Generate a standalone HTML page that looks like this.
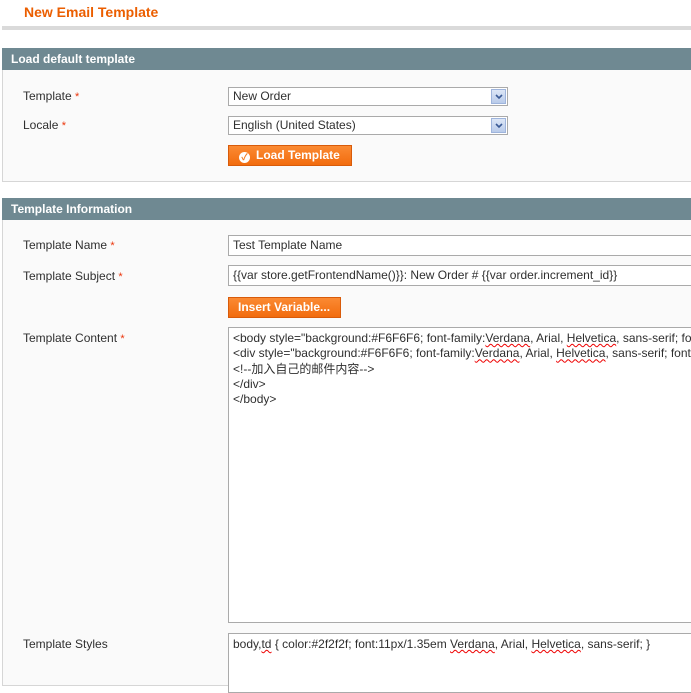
<!DOCTYPE html>
<html><head><meta charset="utf-8"><style>
body{margin:0;background:#fff;font-family:"Liberation Sans","Noto Sans CJK SC",sans-serif;font-size:12px;color:#2f2f2f;width:691px;height:685px;overflow:hidden;position:relative}
.a{position:absolute}
.title{left:24px;top:4px;font-size:14px;font-weight:bold;color:#eb5e00}
.bar{left:2px;top:26px;width:689px;height:4px;background:#dadada}
.hd{left:2px;width:689px;height:22px;background:#6f8992;color:#fff;font-weight:bold;font-size:12px;line-height:22px;text-indent:9px}
.bd{left:2px;width:688px;background:#fafafa;border:1px solid #d6d6d6;border-top:none}
.lb{left:23px}
.lb i{color:#eb340a;font-style:normal;font-size:11px}
.in{left:228px;background:#fff;border:1px solid #aaa;border-right:none;box-sizing:border-box;padding-left:4px;line-height:17px;white-space:nowrap;overflow:hidden;font-size:12px}
.sel{width:280px;border-right:1px solid #aaa}
.sel b{position:absolute;right:1px;top:1px;width:15px;height:15px;background:linear-gradient(#dce6f7,#b9cbea);border:1px solid #9eb4dc;box-sizing:border-box}
.sel svg{position:absolute;left:3px;top:4px}
.btn{left:228px;height:21px;background:linear-gradient(#fb8a33,#f26c0e);border:1px solid #d85b0a;box-sizing:border-box;color:#fff;font-weight:bold;font-size:12px;line-height:19px}
.ta{left:228px;width:463px;background:#fff;border:1px solid #aaa;border-right:none;box-sizing:border-box;padding:3px 4px;font-size:12px;line-height:15.3px;white-space:pre;overflow:hidden}
u{text-decoration:underline wavy #e00;text-decoration-thickness:1px}
</style></head><body>
<div class="a title">New Email Template</div>
<div class="a bar"></div>
<div class="a hd" style="top:48px">Load default template</div>
<div class="a bd" style="top:70px;height:111px"></div>
<div class="a lb" style="top:89px">Template <i>*</i></div>
<div class="a lb" style="top:118px">Locale <i>*</i></div>
<div class="a in sel" style="top:87px;height:19px">New Order<b><svg width="8" height="6"><path d="M1 1L4 4L7 1" stroke="#3a5a95" stroke-width="1.6" fill="none"/></svg></b></div>
<div class="a in sel" style="top:116px;height:19px">English (United States)<b><svg width="8" height="6"><path d="M1 1L4 4L7 1" stroke="#3a5a95" stroke-width="1.6" fill="none"/></svg></b></div>
<div class="a btn" style="top:145px;width:124px;padding-left:10px"><span style="display:inline-block;width:11px;height:11px;border-radius:50%;background:#fff;color:#f27a1e;font-size:9px;line-height:11px;text-align:center;vertical-align:-1px;margin-right:6px">&#10003;</span>Load Template</div>
<div class="a hd" style="top:198px">Template Information</div>
<div class="a bd" style="top:220px;height:465px"></div>
<div class="a lb" style="top:238px">Template Name <i>*</i></div>
<div class="a lb" style="top:269px">Template Subject <i>*</i></div>
<div class="a lb" style="top:331px">Template Content <i>*</i></div>
<div class="a lb" style="top:637px">Template Styles</div>
<div class="a in" style="top:235px;width:463px;height:21px;line-height:19px">Test Template Name</div>
<div class="a in" style="top:265px;width:463px;height:21px;line-height:19px">{{var store.getFrontendName()}}: New Order # {{var order.increment_id}}</div>
<div class="a btn" style="top:297px;width:113px;padding-left:9px">Insert Variable...</div>
<div class="a ta" style="top:327px;height:296px">&lt;body style="background:#F6F6F6; font-family:<u>Verdana</u>, Arial, <u>Helvetica</u>, sans-serif; font-size:12px;
&lt;div style="background:#F6F6F6; font-family:<u>Verdana</u>, Arial, <u>Helvetica</u>, sans-serif; font-size:12px;
&lt;!--加入自己的邮件内容--&gt;
&lt;/div&gt;
&lt;/body&gt;</div>
<div class="a ta" style="top:633px;height:60px">body,<u>td</u> { color:#2f2f2f; font:11px/1.35em <u>Verdana</u>, Arial, <u>Helvetica</u>, sans-serif; }</div>
</body></html>
